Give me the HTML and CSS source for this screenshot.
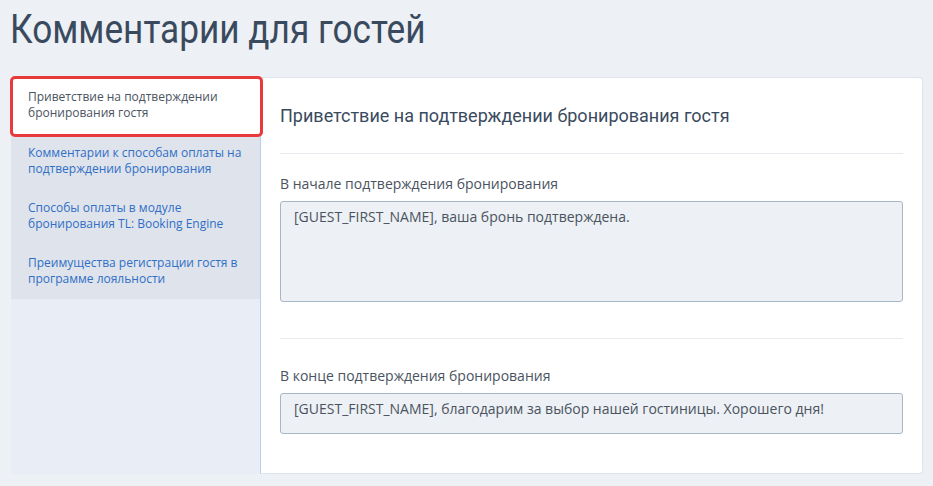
FILE: index.html
```html
<!DOCTYPE html>
<html lang="ru">
<head>
    <meta charset="UTF-8">
    <meta name="viewport" content="width=device-width, initial-scale=1.0">
    <title>Комментарии для гостей</title>
    <link rel="stylesheet" href="styles.css">
</head>
<body>
    <h1 class="page-title">Комментарии для гостей</h1>

    <div class="layout">
        <!-- Left menu -->
        <div class="sidebar">
            <ul class="menu">
                <li class="menu-item active">Приветствие на подтверждении бронирования гостя</li>
                <li class="menu-item"><a href="#">Комментарии к способам оплаты на подтверждении бронирования</a></li>
                <li class="menu-item"><a href="#">Способы оплаты в модуле бронирования TL: Booking Engine</a></li>
                <li class="menu-item"><a href="#">Преимущества регистрации гостя в программе лояльности</a></li>
            </ul>
        </div>

        <!-- Content panel -->
        <div class="panel">
            <h2 class="panel-title">Приветствие на подтверждении бронирования гостя</h2>

            <div class="field first">
                <label for="startText">В начале подтверждения бронирования</label>
                <textarea id="startText" class="text-box tall">[GUEST_FIRST_NAME], ваша бронь подтверждена.</textarea>
            </div>

            <div class="field second">
                <label for="endText">В конце подтверждения бронирования</label>
                <textarea id="endText" class="text-box short">[GUEST_FIRST_NAME], благодарим за выбор нашей гостиницы. Хорошего дня!</textarea>
            </div>
        </div>
    </div>
</body>
</html>
```

FILE: styles.css
```css
body {
    margin: 0;
    background-color: #edf0f4;
    font-family: "Open Sans", Arial, sans-serif;
    color: #4a5360;
}
.page-title {
    margin: 6px 0 23px 10px;
    font-family: Roboto, Arial, sans-serif;
    font-weight: 400;
    font-size: 40px;
    line-height: 48px;
    color: #3a4a5e;
    /* no condensed face installed, squeeze the regular one */
    transform: scaleX(0.88);
    transform-origin: left center;
}
.layout {
    display: flex;
    margin: 0 10px 0 11px;
    height: 397px;
}
.sidebar {
    width: 249px;
    flex-shrink: 0;
    background-color: #e9edf5;
}
.menu {
    list-style-type: none;
    margin: 0;
    padding: 0;
    background-color: #dfe3ec;
}
.menu-item {
    padding: 11px 14px 12px 17px;
    font-size: 12px;
    line-height: 16px;
}
.menu-item a {
    color: #2f6fc6;
    text-decoration: none;
}
.menu-item.active {
    position: relative;
    background-color: #fff;
    color: #4a5360;
    padding-top: 12px;
    padding-bottom: 13px;
}
/* highlight frame around the current item */
.menu-item.active::after {
    content: "";
    position: absolute;
    top: -1px;
    left: -1px;
    right: -3px;
    bottom: -3px;
    border: 3px solid #e8393b;
    border-radius: 5px;
}
.panel {
    flex: 1;
    background-color: #fff;
    border: 1px solid #dde3ea;
    border-left-color: #b6cfe8;
    border-radius: 0 4px 4px 0;
    padding: 25px 19px 0;
}
.panel-title {
    margin: 0;
    padding-bottom: 24px;
    border-bottom: 1px solid #e6eaef;
    font-family: Roboto, Arial, sans-serif;
    font-weight: 400;
    font-size: 18px;
    line-height: 26px;
    color: #3a4a5e;
}
.field label {
    display: block;
    font-size: 14px;
    line-height: 20px;
    margin-bottom: 7px;
}
.field.first {
    padding-top: 20px;
    padding-bottom: 36px;
    border-bottom: 1px solid #e6eaef;
}
.field.second {
    padding-top: 27px;
}
.text-box {
    display: block;
    box-sizing: border-box;
    width: 100%;
    margin: 0;
    padding: 5px 13px;
    border: 1px solid #a9b6c8;
    border-radius: 3px;
    background-color: #edf0f4;
    font-family: "Open Sans", Arial, sans-serif;
    font-size: 14px;
    line-height: 20px;
    color: #4a5360;
    resize: none;
    overflow: hidden;
}
.text-box.tall {
    height: 101px;
}
.text-box.short {
    height: 41px;
}
```
